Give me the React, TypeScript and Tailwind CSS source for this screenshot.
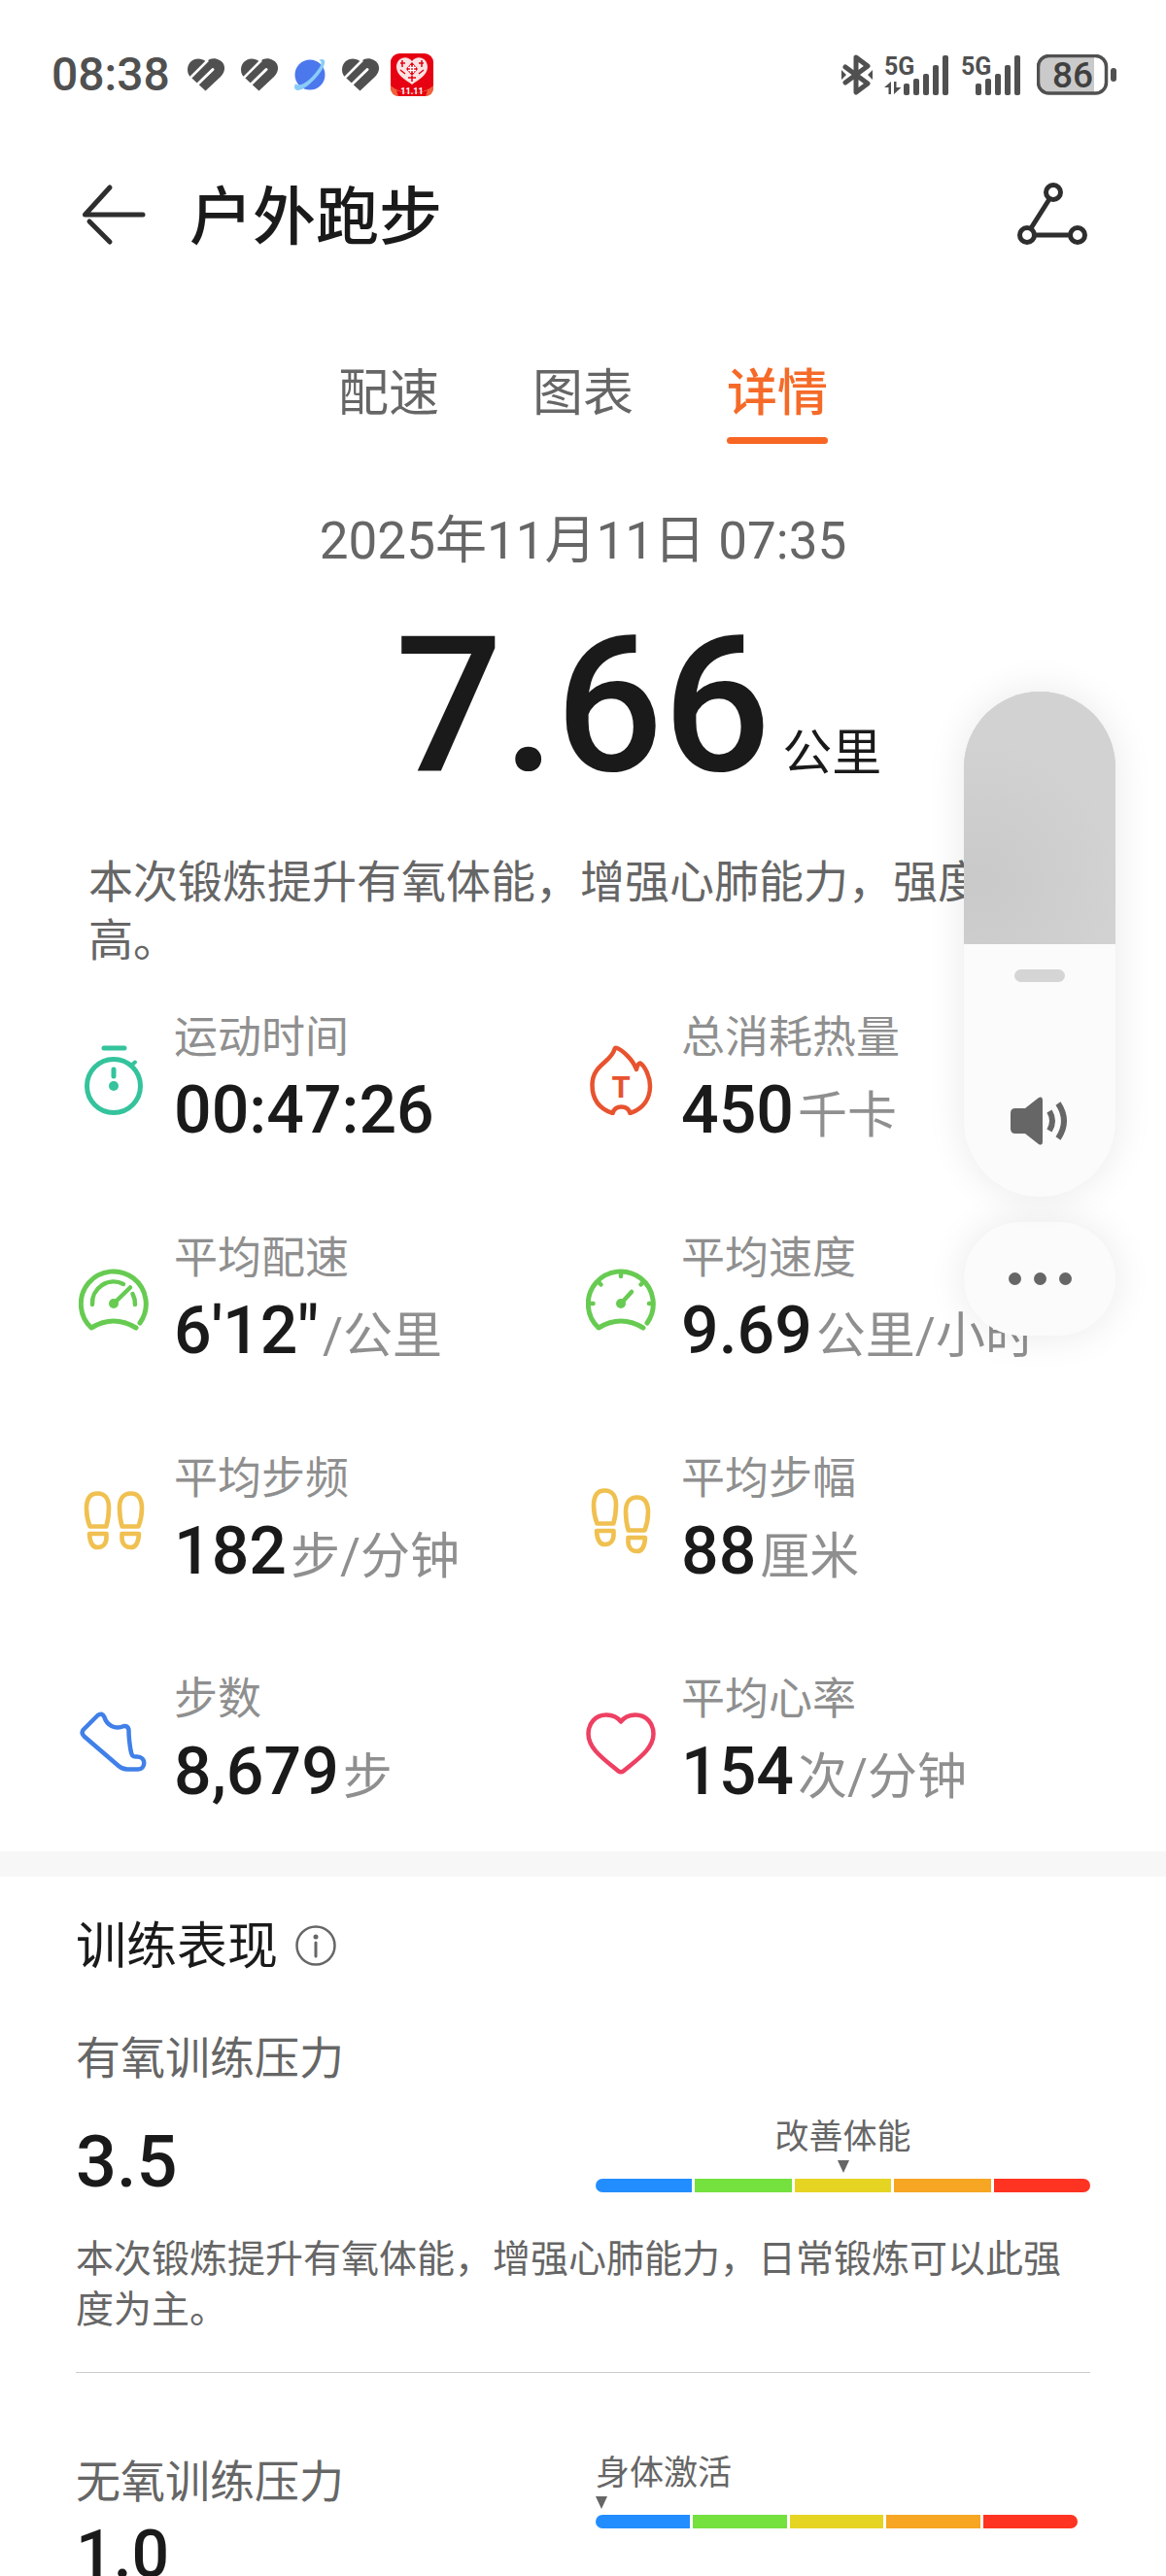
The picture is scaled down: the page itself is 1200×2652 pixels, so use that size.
import type { ReactNode } from "react";

type Stat = {
  label: string;
  value: string;
  unit?: string;
  icon: ReactNode;
};

function HealthIcon() {
  return (
    <svg viewBox="0 0 38 34" className="h-[34px] w-[38px]" fill="none">
      <path d="M19 3.500C11-3 0 2 0 12C0 16 2 19 5 21L18.500 33.500L34 19C40 13 39 5 33 2C28-1 23 0 19 3.500Z" fill="#505050" />
      <path d="M1 22L21 2" stroke="#fff" strokeWidth="2.500" />
      <path d="M8 29L26 11.500" stroke="#fff" strokeWidth="3" strokeLinecap="round" />
      <path d="M4 25L13 34H2Z" fill="#fff" />
    </svg>
  );
}

function PlanetIcon() {
  return (
    <svg viewBox="0 0 32 34" className="h-[34px] w-8">
      <circle cx="16" cy="17" r="15.500" fill="#4c78ee" />
      <path d="M1 26C-1 30 0 33 4 33C13 32 30 14 31 5C32 1 29 0 25 2C30 3 27 9 20 17C13 25 5 30 1 26Z" fill="#8accf8" />
    </svg>
  );
}

function FestivalIcon() {
  return (
    <svg viewBox="0 0 44 44" className="h-11 w-11">
      <rect width="44" height="44" rx="9" fill="#e60012" />
      <path d="M0 33C10 43 34 43 44 33V35Q44 44 35 44H9Q0 44 0 35Z" fill="#f0603a" />
      <path d="M6 38C14 42 30 42 38 38L36 44H8Z" fill="#e60012" />
      <path d="M22 8C17 1 6 4 6 14C6 22 15 27 22 32C29 27 38 22 38 14C38 4 27 1 22 8Z" fill="#fbe3e3" />
      <path d="M10 10h5M12 7v7M29 10h5M32 7v7M10 17l5 4M34 17l-5 4M18 25h8M22 23v6" stroke="#e60012" strokeWidth="1.500" />
      <path d="M22 9l6 7-6 7-6-7z" fill="#e60012" />
      <path d="M18 14.500h8M18 17.500h8M20.500 12v8M23.500 12v8" stroke="#fff" strokeWidth="1.300" />
      <text x="22" y="42" textAnchor="middle" fontSize="9" fontWeight="700" fill="#fff">11.11</text>
    </svg>
  );
}

function BluetoothIcon() {
  return (
    <svg viewBox="0 0 32 42" className="h-[42px] w-8" fill="none" stroke="#505050" strokeWidth="5" strokeLinejoin="round" strokeLinecap="round">
      <path d="M4 13L27 30L15 39V3L27 12L4 29" />
      <path d="M0 16l5 5-5 5zM32 16l-5 5 5 5z" fill="#505050" stroke="none" />
    </svg>
  );
}

function SignalIcon({ data }: { data?: boolean }) {
  return (
    <svg viewBox="0 0 67 42" className="h-[42px] w-[67px] overflow-visible" fill="#505050">
      <text x={data ? 0 : 5} y="21" fontSize="25" fontWeight="700">5G</text>
      {data && <path d="M7 28v13H4.500v-7H0zM10 28v13L17.500 34H12.500v-6z" />}
      <rect x="20" y="30" width="6" height="12" rx="2" />
      <rect x="30" y="25" width="6" height="17" rx="2" />
      <rect x="40" y="20" width="6" height="22" rx="2" />
      <rect x="50" y="11" width="6" height="31" rx="2" />
      <rect x="60" y="1" width="6" height="41" rx="2" />
    </svg>
  );
}

function BatteryIcon() {
  return (
    <svg viewBox="0 0 83 42" className="h-[42px] w-[83px]">
      <path d="M12 3H59V39H12Q3 39 3 30V12Q3 3 12 3Z" fill="#cacaca" />
      <rect x="1.500" y="1.500" width="70" height="38.500" rx="11" fill="none" stroke="#505050" strokeWidth="3.500" />
      <rect x="76" y="14" width="6" height="14" rx="3" fill="#505050" />
      <text x="37" y="34" textAnchor="middle" fontSize="37" fontWeight="500" fill="#404040">86</text>
    </svg>
  );
}

function StatIcon({ color, children }: { color: string; children: ReactNode }) {
  return (
    <svg
      viewBox="0 0 72 72"
      className="h-[72px] w-[72px] shrink-0"
      fill="none"
      stroke={color}
      strokeWidth="5"
      strokeLinecap="round"
      strokeLinejoin="round"
    >
      {children}
    </svg>
  );
}

function Foot() {
  return (
    <>
      <path d="M11.500 41.500C9 35 8 30 8 23C8 13 12 7.500 19.500 7.500C27 7.500 31 13 31 22C31 30 30 36 28.300 41.500Z" strokeWidth="4.600" />
      <path d="M11 49H28.500V53C28.500 59 25 63 19.500 63C14 63 11.500 58 11 49Z" strokeWidth="4.600" />
    </>
  );
}

const stats: Stat[] = [
  {
    label: "运动时间",
    value: "00:47:26",
    icon: (
      <StatIcon color="#34c39c">
        <circle cx="36" cy="42" r="27.500" />
        <path d="M26 3H47M36 25V32" />
        <path d="M55 20L58 17.500" strokeWidth="4" />
        <circle cx="36" cy="42" r="5" fill="#34c39c" stroke="none" />
      </StatIcon>
    ),
  },
  {
    label: "总消耗热量",
    value: "450",
    unit: "千卡",
    icon: (
      <StatIcon color="#e8532f">
        <path d="M32 3C37 5 48 14 52 25Q53 19 56 18.500C61 22 66 33 66 42C66 54 60 65 45.500 70C44 65 41 63.500 36.500 63.500C32 63.500 29 65 27.500 70C12 65 6.500 54 6.500 41C6.500 20 26 18 29.500 4Q30 2 32 3Z" strokeWidth="4.500" />
        <text x="36" y="54" textAnchor="middle" fontSize="31" fontWeight="700" fill="#e8532f" stroke="none">T</text>
      </StatIcon>
    ),
  },
  {
    label: "平均配速",
    value: "6'12\"",
    unit: "/公里",
    icon: (
      <StatIcon color="#67cb52">
        <path d="M63 59A33.500 33.500 0 1 0 13 64Q36 50 59 64" />
        <path d="M14 40A22 22 0 0 1 46 19M55.500 29A22 22 0 0 1 58 40M36 39L53 22.500" strokeWidth="4.500" />
        <circle cx="36" cy="39" r="5" fill="#67cb52" stroke="none" />
      </StatIcon>
    ),
  },
  {
    label: "平均速度",
    value: "9.69",
    unit: "公里/小时",
    icon: (
      <StatIcon color="#67cb52">
        <path d="M63 59A33.500 33.500 0 1 0 13 64Q36 50 59 64" />
        <path d="M4 39H7.500M65 39H68M36 7V11M13 17L15.500 19.500M59 17L56.500 19.500M36 39L47 27" strokeWidth="4.500" />
        <circle cx="36" cy="39" r="5" fill="#67cb52" stroke="none" />
      </StatIcon>
    ),
  },
  {
    label: "平均步频",
    value: "182",
    unit: "步/分钟",
    icon: (
      <StatIcon color="#f0c050">
        <Foot />
        <g transform="matrix(-1 0 0 1 73 0)">
          <Foot />
        </g>
      </StatIcon>
    ),
  },
  {
    label: "平均步幅",
    value: "88",
    unit: "厘米",
    icon: (
      <StatIcon color="#f0c050">
        <g transform="translate(0 -3)">
          <Foot />
        </g>
        <g transform="matrix(-1 0 0 1 72 4)">
          <Foot />
        </g>
      </StatIcon>
    ),
  },
  {
    label: "步数",
    value: "8,679",
    unit: "步",
    icon: (
      <StatIcon color="#4080e8">
        <path d="M19.500 9L5 23.500Q2 27 5.500 30.500L41 61Q45 64.500 50 64.500H61C69 64.500 70 51.500 60 51.500C55 52 54.500 50 53.500 45C52 36 51.500 31 51.500 24Q51 19.500 46.500 20C37 24 29 19 26.500 11Q24 5.500 19.500 9Z" strokeWidth="4.500" />
      </StatIcon>
    ),
  },
  {
    label: "平均心率",
    value: "154",
    unit: "次/分钟",
    icon: (
      <StatIcon color="#ee4062">
        <path d="M36 15.500C32 10 26 8.500 21 8.500C10 8.500 2.500 17 2.500 28C2.500 44 20 55 33 66Q36 68.500 39 66C52 55 69.500 44 69.500 28C69.500 17 62 8.500 51 8.500C46 8.500 40 10 36 15.500Z" strokeWidth="4.500" />
      </StatIcon>
    ),
  },
];

const tabs = ["配速", "图表", "详情"];

function StatusBar() {
  return (
    <div className="flex h-[154px] items-center justify-between pr-[50px] pl-[53px]">
      <div className="flex items-center">
        <span className="mr-[18px] text-[48px] leading-none font-medium text-[#505050]">08:38</span>
        <div className="flex items-center gap-[17px]">
          <HealthIcon />
          <HealthIcon />
          <PlanetIcon />
          <HealthIcon />
        </div>
        <div className="ml-3">
          <FestivalIcon />
        </div>
      </div>
      <div className="flex items-center">
        <BluetoothIcon />
        <div className="mr-4 ml-3 flex gap-[7px]">
          <SignalIcon data />
          <SignalIcon />
        </div>
        <BatteryIcon />
      </div>
    </div>
  );
}

function StatItem({ stat }: { stat: Stat }) {
  return (
    <div className="flex h-[148px] items-center gap-[26px] pl-[3px]">
      {stat.icon}
      <div className="whitespace-nowrap">
        <div className="text-[45px] leading-[62px] text-[#8f8f8f]">{stat.label}</div>
        <div className="flex h-[86px] items-baseline gap-1 leading-[86px]">
          <span className="text-[68px] font-medium">{stat.value}</span>
          {stat.unit && <span className="text-[51px] text-[#8f8f8f]">{stat.unit}</span>}
        </div>
      </div>
    </div>
  );
}

function LevelBar() {
  return (
    <div className="flex h-3.5 gap-[3px] overflow-hidden rounded-full">
      <div className="flex-1 bg-[#228dff]" />
      <div className="flex-1 bg-[#74e13f]" />
      <div className="flex-1 bg-[#e6d423]" />
      <div className="flex-1 bg-[#f6a623]" />
      <div className="flex-1 bg-[#ff3322]" />
    </div>
  );
}

function Pointer() {
  return (
    <svg viewBox="0 0 12 13" className="h-[13px] w-3">
      <path d="M0 0H12L6 13Z" fill="#666" />
    </svg>
  );
}

function VolumePanel() {
  return (
    <div className="absolute top-[712px] right-[52px] flex w-[156px] flex-col gap-[26px]">
      <div className="relative flex h-[520px] flex-col items-center overflow-hidden rounded-full bg-[#fbfbfb] shadow-[0_0_40px_rgba(0,0,0,0.09)]">
        <div className="h-[260px] w-full bg-[#d2d2d2] bg-[radial-gradient(circle_at_10%_75%,#c9c9c9,#d2d2d2_60%)]" />
        <div className="mt-[26px] h-[13px] w-[52px] rounded-full bg-[#d5d5d5]" />
        <svg viewBox="0 0 60 50" className="mt-[118px] h-[50px] w-[60px]">
          <path d="M5 12H15L29 1Q33-1 33 4V46Q33 51 29 49L15 38H5Q0 38 0 33V17Q0 12 5 12Z" fill="#666" />
          <path d="M40 15Q46 25 40 35M49 7Q61 25 49 43" fill="none" stroke="#666" strokeWidth="6" />
        </svg>
        <input
          type="range"
          aria-label="音量"
          defaultValue={50}
          className="absolute inset-0 h-full w-full opacity-0 [writing-mode:vertical-lr]"
        />
      </div>
      <button
        aria-label="更多"
        className="flex h-[117px] items-center justify-center gap-[13px] rounded-full bg-[#fbfbfb] shadow-[0_0_40px_rgba(0,0,0,0.09)]"
      >
        <span className="h-[13px] w-[13px] rounded-full bg-[#666]" />
        <span className="h-[13px] w-[13px] rounded-full bg-[#666]" />
        <span className="h-[13px] w-[13px] rounded-full bg-[#666]" />
      </button>
    </div>
  );
}

export default function App() {
  return (
    <div className="relative overflow-hidden bg-white font-[Roboto,'Noto_Sans_CJK_SC',sans-serif] text-[#1a1a1a]">
      <StatusBar />

      <header className="mt-0.5 flex h-[130px] items-center pr-[78px] pl-[82px]">
        <button aria-label="返回">
          <svg viewBox="0 0 70 64" className="h-16 w-[70px]" fill="none" stroke="#2e2e2e" strokeWidth="5" strokeLinecap="round" strokeLinejoin="round">
            <path d="M65 32H5.500L31 4M10 39L31 60" />
          </svg>
        </button>
        <h1 className="ml-[43px] flex-1 pt-1.5 text-[65px] leading-[80px] font-medium">户外跑步</h1>
        <button aria-label="轨迹">
          <svg viewBox="0 0 78 72" className="h-[72px] w-[78px]" fill="none" stroke="#2e2e2e" strokeWidth="5">
            <circle cx="40" cy="13" r="7.500" />
            <circle cx="13" cy="57" r="7.500" />
            <circle cx="65" cy="57" r="7.500" />
            <path d="M36 20L17 50M21 57H57" />
          </svg>
        </button>
      </header>

      <nav className="mt-20 flex justify-center gap-24">
        {tabs.map((tab) => (
          <button
            key={tab}
            className={
              tab === "详情"
                ? "flex flex-col items-center text-[52px] leading-[80px] font-medium text-[#f56a28]"
                : "flex flex-col items-center text-[52px] leading-[80px] text-[#666]"
            }
          >
            {tab}
            {tab === "详情" && <span className="mt-1 h-[7px] w-full rounded-full bg-[#f86624]" />}
          </button>
        ))}
      </nav>

      <p className="mt-[61px] text-center text-[53px] leading-[78px] text-[#666]">2025年11月11日 07:35</p>

      <div className="flex items-baseline gap-3">
        <div className="flex-1" />
        <span className="text-[195px] leading-[262px] font-medium">7.66</span>
        <span className="flex-1 text-[51px]">公里</span>
      </div>

      <p className="mt-5 px-[91px] text-[46px] leading-[60px] text-[#666]">
        本次锻炼提升有氧体能，增强心肺能力，强度较高。
      </p>

      <section className="mt-10 grid grid-cols-2 gap-y-[79px] px-[78px] pb-[39px]">
        {stats.map((stat) => (
          <StatItem key={stat.label} stat={stat} />
        ))}
      </section>

      <div className="h-[26px] bg-[#f7f7f7]" />

      <section className="px-[78px] pt-8">
        <div className="flex items-center gap-[18px]">
          <h2 className="pt-1 text-[52px] leading-[74px]">训练表现</h2>
          <button aria-label="说明">
            <svg viewBox="0 0 42 42" className="h-[42px] w-[42px]" fill="none" stroke="#666" strokeWidth="2.500">
              <circle cx="21" cy="21" r="19.500" />
              <path d="M21 18V32" strokeWidth="3" strokeLinecap="round" />
              <circle cx="21" cy="12" r="2.500" fill="#666" stroke="none" />
            </svg>
          </button>
        </div>

        <h3 className="mt-[42px] text-[46px] leading-[70px] text-[#666]">有氧训练压力</h3>
        <div className="mt-5 flex items-start justify-between">
          <span className="text-[74px] leading-[104px] font-medium">3.5</span>
          <div className="flex w-[509px] flex-col items-center">
            <span className="pt-1 text-[35px] leading-[46px] text-[#666]">改善体能</span>
            <Pointer />
            <div className="mt-1.5 w-full">
              <LevelBar />
            </div>
          </div>
        </div>
        <p className="mt-[22px] text-[39px] leading-[52px] text-[#666]">
          本次锻炼提升有氧体能，增强心肺能力，日常锻炼可以此强度为主。
        </p>

        <div className="mt-[38px] flex items-start justify-between border-t border-[#ccc] pt-[77px]">
          <div>
            <h3 className="text-[46px] leading-[70px] text-[#666]">无氧训练压力</h3>
            <div className="mt-3 text-[68px] leading-[56px] font-medium">1.0</div>
          </div>
          <div className="mr-[13px] flex w-[496px] flex-col items-start">
            <span className="pt-1 text-[35px] leading-[46px] text-[#666]">身体激活</span>
            <Pointer />
            <div className="mt-1.5 w-full">
              <LevelBar />
            </div>
          </div>
        </div>
      </section>

      <VolumePanel />
    </div>
  );
}
